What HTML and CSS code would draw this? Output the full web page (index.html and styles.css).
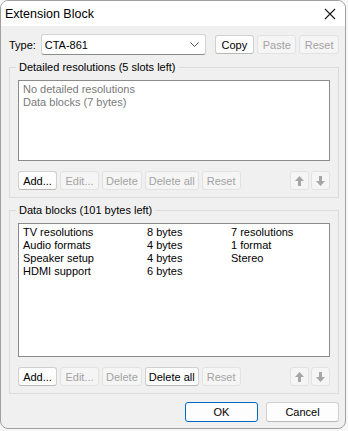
FILE: index.html
```html
<!DOCTYPE html>
<html lang="en">
<head>
    <meta charset="UTF-8">
    <title>Extension Block</title>
    <link rel="stylesheet" href="styles.css">
</head>
<body>
    <div class="window">
        <div class="titlebar">
            <span class="title">Extension Block</span>
            <svg class="close" width="12" height="12" viewBox="0 0 12 12">
                <path d="M1 1 L11 11 M11 1 L1 11" stroke="#1b1b1b" stroke-width="1.1" fill="none"/>
            </svg>
        </div>
        <div class="content">
            <div class="type-row">
                <span class="type-label">Type:</span>
                <div class="combo">
                    <span>CTA-861</span>
                    <svg width="9" height="5" viewBox="0 0 9 5">
                        <path d="M0.5 0.5 L4.5 4.5 L8.5 0.5" stroke="#555" stroke-width="1" fill="none"/>
                    </svg>
                </div>
                <button class="btn btn-copy">Copy</button>
                <button class="btn btn-paste" disabled>Paste</button>
                <button class="btn btn-reset" disabled>Reset</button>
            </div>

            <fieldset class="group">
                <legend>Detailed resolutions (5 slots left)</legend>
                <div class="listbox listbox-short">
                    <div class="note">No detailed resolutions</div>
                    <div class="note">Data blocks (7 bytes)</div>
                </div>
                <div class="list-actions">
                    <button class="btn">Add...</button>
                    <button class="btn" disabled>Edit...</button>
                    <button class="btn" disabled>Delete</button>
                    <button class="btn" disabled>Delete all</button>
                    <button class="btn" disabled>Reset</button>
                    <div class="arrows">
                        <button class="btn btn-arrow" disabled>
                            <svg width="9" height="10" viewBox="0 0 9 10"><path d="M4.5 0 L9 5 L6 5 L6 10 L3 10 L3 5 L0 5 Z" fill="#a6a6a6"/></svg>
                        </button>
                        <button class="btn btn-arrow" disabled>
                            <svg width="9" height="10" viewBox="0 0 9 10"><path d="M4.5 10 L9 5 L6 5 L6 0 L3 0 L3 5 L0 5 Z" fill="#a6a6a6"/></svg>
                        </button>
                    </div>
                </div>
            </fieldset>

            <fieldset class="group group-blocks">
                <legend>Data blocks (101 bytes left)</legend>
                <div class="listbox listbox-tall">
                    <div class="block-row"><span>TV resolutions</span><span>8 bytes</span><span>7 resolutions</span></div>
                    <div class="block-row"><span>Audio formats</span><span>4 bytes</span><span>1 format</span></div>
                    <div class="block-row"><span>Speaker setup</span><span>4 bytes</span><span>Stereo</span></div>
                    <div class="block-row"><span>HDMI support</span><span>6 bytes</span><span></span></div>
                </div>
                <div class="list-actions">
                    <button class="btn">Add...</button>
                    <button class="btn" disabled>Edit...</button>
                    <button class="btn" disabled>Delete</button>
                    <button class="btn">Delete all</button>
                    <button class="btn" disabled>Reset</button>
                    <div class="arrows">
                        <button class="btn btn-arrow" disabled>
                            <svg width="9" height="10" viewBox="0 0 9 10"><path d="M4.5 0 L9 5 L6 5 L6 10 L3 10 L3 5 L0 5 Z" fill="#a6a6a6"/></svg>
                        </button>
                        <button class="btn btn-arrow" disabled>
                            <svg width="9" height="10" viewBox="0 0 9 10"><path d="M4.5 10 L9 5 L6 5 L6 0 L3 0 L3 5 L0 5 Z" fill="#a6a6a6"/></svg>
                        </button>
                    </div>
                </div>
            </fieldset>

            <div class="dialog-actions">
                <button class="btn btn-dialog btn-default">OK</button>
                <button class="btn btn-dialog">Cancel</button>
            </div>
        </div>
    </div>
</body>
</html>
```
FILE: styles.css
```css
body {
    margin: 0;
    background-color: #f7f7f7;
    font-family: "Liberation Sans", Arial, sans-serif;
    font-size: 11px;
    color: #000;
}
.window {
    width: 346px;
    height: 429px;
    box-sizing: border-box;
    border: 1px solid #a0a0a0;
    border-radius: 8px;
    background-color: #f0f0f0;
    overflow: hidden;
    display: flex;
    flex-direction: column;
}
.titlebar {
    height: 25px;
    background-color: #fff;
    display: flex;
    align-items: center;
    justify-content: space-between;
    padding: 0 9px 0 4px;
    flex-shrink: 0;
}
.title {
    font-size: 12.5px;
}
.content {
    padding: 8px 6px 0 8px;
    display: flex;
    flex-direction: column;
}
.type-row {
    display: flex;
    align-items: center;
    height: 21px;
}
.type-label {
    width: 32px;
}
.combo {
    width: 166px;
    height: 21px;
    box-sizing: border-box;
    border: 1px solid #d4d4d4;
    border-bottom-color: #8a8a8a;
    border-radius: 3px;
    background-color: #fff;
    display: flex;
    align-items: center;
    justify-content: space-between;
    padding: 0 6px 0 3px;
    margin-right: 9px;
}
.btn {
    font-family: inherit;
    font-size: 11px;
    color: #000;
    height: 19px;
    min-width: 39px;
    box-sizing: border-box;
    padding: 0 3px;
    border: 1px solid #d0d0d0;
    border-bottom-color: #b8b8b8;
    border-radius: 3px;
    background-color: #fdfdfd;
    display: inline-flex;
    align-items: center;
    justify-content: center;
}
.btn:disabled {
    color: #a3a3a3;
    background-color: #f5f5f5;
    border-color: #e2e2e2;
}
.btn-copy {
    width: 40px;
    margin-right: 3px;
}
.btn-paste {
    width: 38px;
    margin-right: 3px;
}
.btn-reset {
    width: 40px;
}
.group {
    margin: 5px 0 0;
    padding: 0 8px 7px;
    border: 1px solid #dcdcdc;
    min-width: 0;
}
.group legend {
    padding: 0 3px;
    margin-left: -2px;
    line-height: 15px;
}
.listbox {
    margin-top: 5px;
    box-sizing: border-box;
    border: 1px solid #8c8c8c;
    background-color: #fff;
    padding: 2px 4px;
    line-height: 13px;
}
.listbox-short {
    height: 81px;
}
.listbox-tall {
    height: 134px;
}
.note {
    color: #7a7a7a;
}
.block-row {
    display: grid;
    grid-template-columns: 124px 84px 1fr;
}
.list-actions {
    margin-top: 10px;
    display: flex;
    gap: 3px;
}
.arrows {
    margin-left: auto;
    display: flex;
    gap: 2px;
}
.btn-arrow {
    min-width: 0;
    width: 19px;
    padding: 0;
}
.dialog-actions {
    margin-top: 8px;
    display: flex;
    justify-content: flex-end;
    gap: 8px;
}
.btn-dialog {
    width: 73px;
    height: 20px;
}
.btn-default {
    border: 1px solid #0067c0;
}
```
